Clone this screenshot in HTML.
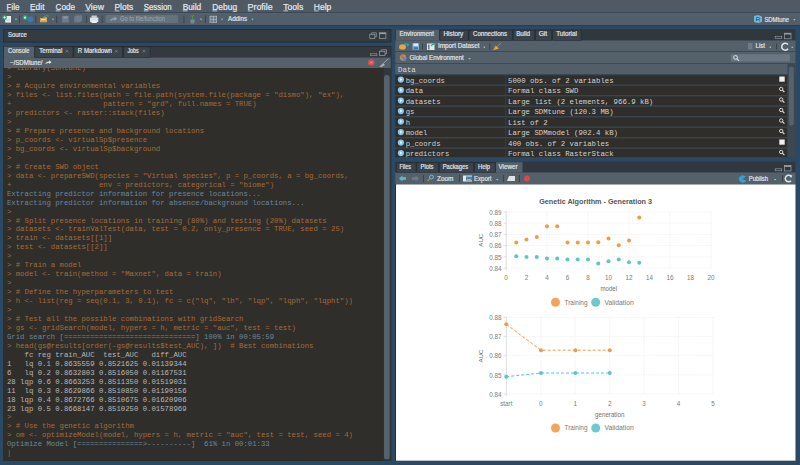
<!DOCTYPE html>
<html><head><meta charset="utf-8">
<style>
*{box-sizing:border-box;margin:0;padding:0}
html,body{width:800px;height:465px;overflow:hidden;background:#2c4964;font-family:"Liberation Sans",sans-serif}
.a{position:absolute}
#cwrap{left:3.8px;top:68px;width:380px;height:392.5px;overflow:hidden}
#ctext{left:3.2px;top:-3.7px;width:376px;height:397px;overflow:hidden;font-family:"Liberation Mono",monospace;font-size:7.3px;line-height:8.95px;white-space:pre;color:#a56c38}
#ctext .o{color:#6a869d}
#ctext .w{color:#b8b8b8}
.row{font-family:"Liberation Mono",monospace}
svg{position:absolute;left:0;top:0}
</style></head><body>

<svg width="800" height="465" viewBox="0 0 800 465" font-family="Liberation Sans, sans-serif">
<rect x="0" y="0" width="800" height="12.5" fill="#4f5a65"/>
<text x="6.5" y="9.6" font-size="8.6" fill="#e9ecef" textLength="13" lengthAdjust="spacingAndGlyphs" stroke="#e9ecef" stroke-width="0.18">File</text>
<rect x="6.7" y="10.5" width="4.6" height="0.8" fill="#cfd5da"/>
<text x="30" y="9.6" font-size="8.6" fill="#e9ecef" textLength="14.5" lengthAdjust="spacingAndGlyphs" stroke="#e9ecef" stroke-width="0.18">Edit</text>
<rect x="30.2" y="10.5" width="4.6" height="0.8" fill="#cfd5da"/>
<text x="55.5" y="9.6" font-size="8.6" fill="#e9ecef" textLength="19.5" lengthAdjust="spacingAndGlyphs" stroke="#e9ecef" stroke-width="0.18">Code</text>
<rect x="55.7" y="10.5" width="4.6" height="0.8" fill="#cfd5da"/>
<text x="85.2" y="9.6" font-size="8.6" fill="#e9ecef" textLength="18.8" lengthAdjust="spacingAndGlyphs" stroke="#e9ecef" stroke-width="0.18">View</text>
<rect x="85.4" y="10.5" width="4.6" height="0.8" fill="#cfd5da"/>
<text x="114.5" y="9.6" font-size="8.6" fill="#e9ecef" textLength="18.7" lengthAdjust="spacingAndGlyphs" stroke="#e9ecef" stroke-width="0.18">Plots</text>
<rect x="114.7" y="10.5" width="4.6" height="0.8" fill="#cfd5da"/>
<text x="143.7" y="9.6" font-size="8.6" fill="#e9ecef" textLength="28" lengthAdjust="spacingAndGlyphs" stroke="#e9ecef" stroke-width="0.18">Session</text>
<rect x="143.89999999999998" y="10.5" width="4.6" height="0.8" fill="#cfd5da"/>
<text x="182.7" y="9.6" font-size="8.6" fill="#e9ecef" textLength="18.5" lengthAdjust="spacingAndGlyphs" stroke="#e9ecef" stroke-width="0.18">Build</text>
<rect x="182.89999999999998" y="10.5" width="4.6" height="0.8" fill="#cfd5da"/>
<text x="212.3" y="9.6" font-size="8.6" fill="#e9ecef" textLength="24.8" lengthAdjust="spacingAndGlyphs" stroke="#e9ecef" stroke-width="0.18">Debug</text>
<rect x="212.5" y="10.5" width="4.6" height="0.8" fill="#cfd5da"/>
<text x="247.6" y="9.6" font-size="8.6" fill="#e9ecef" textLength="25.1" lengthAdjust="spacingAndGlyphs" stroke="#e9ecef" stroke-width="0.18">Profile</text>
<rect x="247.79999999999998" y="10.5" width="4.6" height="0.8" fill="#cfd5da"/>
<text x="283.2" y="9.6" font-size="8.6" fill="#e9ecef" textLength="20.1" lengthAdjust="spacingAndGlyphs" stroke="#e9ecef" stroke-width="0.18">Tools</text>
<rect x="283.4" y="10.5" width="4.6" height="0.8" fill="#cfd5da"/>
<text x="313.8" y="9.6" font-size="8.6" fill="#e9ecef" textLength="17.5" lengthAdjust="spacingAndGlyphs" stroke="#e9ecef" stroke-width="0.18">Help</text>
<rect x="314.0" y="10.5" width="4.6" height="0.8" fill="#cfd5da"/>
<rect x="0" y="12.3" width="800" height="0.9" fill="#39444e"/>
<rect x="0" y="13.2" width="800" height="12" fill="#525e69"/>
<rect x="0" y="13.2" width="800" height="0.6" fill="#5e6973"/>
<rect x="0" y="25.2" width="800" height="0.9" fill="#2e3a45"/>
<rect x="3.3" y="29.2" width="388" height="13.3" fill="#20282f"/>
<rect x="4.1" y="30" width="386.4" height="11.7" fill="#343b41"/>
<text x="8" y="36.8" font-size="6.3" fill="#e3e6e9" textLength="18.8" lengthAdjust="spacingAndGlyphs" stroke="#e3e6e9" stroke-width="0.18">Source</text>
<rect x="3.3" y="45.9" width="388" height="415" fill="#20282f"/>
<rect x="3.8" y="46.6" width="387" height="11.2" fill="#33393f"/>
<rect x="3.8" y="57.5" width="387" height="10.5" fill="#54606a"/>
<rect x="3.8" y="68" width="379.5" height="392.7" fill="#2f2e2b"/>
<rect x="383.3" y="68" width="8" height="392.7" fill="#30383e"/>
<rect x="384" y="75" width="5.6" height="384.3" fill="#55616b" rx="2.6"/>
<rect x="4" y="46.6" width="30.200000000000003" height="11.2" fill="#54606a"/>
<text x="8" y="53.2" font-size="6.3" fill="#e3e6e9" textLength="21.5" lengthAdjust="spacingAndGlyphs" stroke="#e3e6e9" stroke-width="0.18">Console</text>
<rect x="34.6" y="46.6" width="38.6" height="11" fill="#262b30"/>
<rect x="35.2" y="47.2" width="37.4" height="9.8" fill="#3b434a"/>
<path d="M65.5 49.900000000000006L68.1 52.5M68.1 49.900000000000006L65.5 52.5" stroke="#8a939b" stroke-width="0.6"/>
<text x="39.3" y="53.2" font-size="6.3" fill="#e3e6e9" textLength="23" lengthAdjust="spacingAndGlyphs" stroke="#e3e6e9" stroke-width="0.18">Terminal</text>
<rect x="73.6" y="46.6" width="49.2" height="11" fill="#262b30"/>
<rect x="74.19999999999999" y="47.2" width="48.0" height="9.8" fill="#3b434a"/>
<path d="M115.1 49.900000000000006L117.69999999999999 52.5M117.69999999999999 49.900000000000006L115.1 52.5" stroke="#8a939b" stroke-width="0.6"/>
<text x="77.8" y="53.2" font-size="6.3" fill="#e3e6e9" textLength="34.2" lengthAdjust="spacingAndGlyphs" stroke="#e3e6e9" stroke-width="0.18">R Markdown</text>
<rect x="123.4" y="46.6" width="27.0" height="11" fill="#262b30"/>
<rect x="124.0" y="47.2" width="25.8" height="9.8" fill="#3b434a"/>
<path d="M142.7 49.900000000000006L145.3 52.5M145.3 49.900000000000006L142.7 52.5" stroke="#8a939b" stroke-width="0.6"/>
<text x="127.4" y="53.2" font-size="6.3" fill="#e3e6e9" textLength="11.4" lengthAdjust="spacingAndGlyphs" stroke="#e3e6e9" stroke-width="0.18">Jobs</text>
<text x="10" y="64.5" font-size="6.3" fill="#e3e6e9" textLength="32.5" lengthAdjust="spacingAndGlyphs" stroke="#e3e6e9" stroke-width="0.18">~/SDMtune/</text>
<path d="M45.2 64.3 Q46 61.6 49.2 61.6 L49.2 60.3 L51.5 62.2 L49.2 64.1 L49.2 62.8 Q47 62.8 45.2 64.3Z" fill="#e3e6e9"/>
<circle cx="371.2" cy="62.5" r="3.3" fill="#d64b4b"/>
<path d="M369.6 61.6 L372.8 63.4 M369.6 63.4 L372.8 61.6" stroke="#f4b0b0" stroke-width="0.5"/>
<path d="M380 66.5 L388.5 58.5" stroke="#aab2b9" stroke-width="0.8"/><path d="M379.5 66.8 L383.5 63.5 L385 65 L381.5 67Z" fill="#aab2b9"/>
<rect x="369.8" y="34.3" width="5" height="4.2" fill="none" stroke="#9aa3ab" stroke-width="0.7"/><path d="M371.6 34.3 V32.8 H376.3 V36.8 H374.8" fill="none" stroke="#9aa3ab" stroke-width="0.7"/>
<rect x="379.4" y="32.8" width="6.5" height="5.7" fill="none" stroke="#9aa3ab" stroke-width="0.7"/><rect x="379.4" y="32.8" width="6.5" height="1.3" fill="#9aa3ab"/>
<rect x="370.3" y="53.8" width="6.6" height="1.8" fill="none" stroke="#9aa3ab" stroke-width="0.6"/>
<rect x="379.5" y="51.3" width="5.5" height="4.2" fill="none" stroke="#9aa3ab" stroke-width="0.7"/><path d="M381.3 51.3 V49.8 H386.5 V53.8 H385" fill="none" stroke="#9aa3ab" stroke-width="0.7"/>
<rect x="395.3" y="29.3" width="400.2" height="11.2" fill="#30373d"/>
<rect x="395.3" y="40.5" width="400.2" height="10.8" fill="#54606a"/>
<rect x="395.3" y="51.3" width="400.2" height="0.6" fill="#39434c"/>
<rect x="395.3" y="51.9" width="400.2" height="11.2" fill="#54606a"/>
<rect x="395.3" y="63" width="400.2" height="0.7" fill="#39434c"/>
<rect x="395.3" y="63.7" width="400.2" height="10.3" fill="#525e68"/>
<rect x="396" y="29.6" width="43.19999999999999" height="11" fill="#54606a"/>
<text x="399.5" y="36.2" font-size="6.3" fill="#e3e6e9" textLength="34.5" lengthAdjust="spacingAndGlyphs" stroke="#e3e6e9" stroke-width="0.18">Environment</text>
<rect x="439.5" y="29.9" width="29.0" height="10.6" fill="#262b30"/>
<rect x="440.1" y="30.5" width="27.8" height="9.5" fill="#3b434a"/>
<text x="443.5" y="36.2" font-size="6.3" fill="#e3e6e9" textLength="19.7" lengthAdjust="spacingAndGlyphs" stroke="#e3e6e9" stroke-width="0.18">History</text>
<rect x="468.8" y="29.9" width="43.69999999999999" height="10.6" fill="#262b30"/>
<rect x="469.40000000000003" y="30.5" width="42.499999999999986" height="9.5" fill="#3b434a"/>
<text x="473" y="36.2" font-size="6.3" fill="#e3e6e9" textLength="34" lengthAdjust="spacingAndGlyphs" stroke="#e3e6e9" stroke-width="0.18">Connections</text>
<rect x="512.9" y="29.9" width="22.100000000000023" height="10.6" fill="#262b30"/>
<rect x="513.5" y="30.5" width="20.900000000000023" height="9.5" fill="#3b434a"/>
<text x="516.2" y="36.2" font-size="6.3" fill="#e3e6e9" textLength="13.8" lengthAdjust="spacingAndGlyphs" stroke="#e3e6e9" stroke-width="0.18">Build</text>
<rect x="535.4" y="29.9" width="16.600000000000023" height="10.6" fill="#262b30"/>
<rect x="536.0" y="30.5" width="15.400000000000023" height="9.5" fill="#3b434a"/>
<text x="538.7" y="36.2" font-size="6.3" fill="#e3e6e9" textLength="8.5" lengthAdjust="spacingAndGlyphs" stroke="#e3e6e9" stroke-width="0.18">Git</text>
<rect x="552.5" y="29.9" width="29.0" height="10.6" fill="#262b30"/>
<rect x="553.1" y="30.5" width="27.8" height="9.5" fill="#3b434a"/>
<text x="556.2" y="36.2" font-size="6.3" fill="#e3e6e9" textLength="20.6" lengthAdjust="spacingAndGlyphs" stroke="#e3e6e9" stroke-width="0.18">Tutorial</text>
<rect x="775.2" y="36.4" width="6.6" height="2" fill="none" stroke="#9aa3ab" stroke-width="0.6"/>
<rect x="784.4" y="33.2" width="6.6" height="5.6" fill="none" stroke="#9aa3ab" stroke-width="0.7"/><rect x="784.4" y="33.2" width="6.6" height="1.3" fill="#9aa3ab"/>
<ellipse cx="402.5" cy="47" rx="3.5" ry="2.8" fill="#e8a24a"/><path d="M404 44.5 Q406 43 408.5 44.8 L407 46" stroke="#3aa890" stroke-width="1.2" fill="none"/>
<rect x="412.5" y="43.2" width="6.5" height="6.5" fill="#7fb3df"/><rect x="413.5" y="43.6" width="4.5" height="2.2" fill="#e8f0f8"/><rect x="413.8" y="47.2" width="4" height="2" fill="#3d6f9a"/>
<rect x="422" y="43.5" width="0.7" height="6" fill="#2d353c"/>
<rect x="427" y="43.5" width="7.5" height="6.5" fill="#e6e9ec"/><rect x="428" y="44.5" width="1.5" height="5" fill="#6b7a86"/><path d="M431 46 Q433 43 436.5 44" stroke="#2aa38a" stroke-width="1.3" fill="none"/>
<text x="438" y="48.3" font-size="6.3" fill="#e3e6e9" textLength="41.5" lengthAdjust="spacingAndGlyphs" stroke="#e3e6e9" stroke-width="0.18">Import Dataset</text>
<path d="M483 46.8 h2.6 l-1.3 1.3z" fill="#c9cfd4"/>
<rect x="489.5" y="43.5" width="0.7" height="6" fill="#2d353c"/>
<path d="M501 42.6 L497.3 46.6" stroke="#c98a3a" stroke-width="0.9"/><path d="M493.2 50.2 L495.6 45.6 L499 48.6Z" fill="#eba848"/><path d="M494.4 49.4 L496.4 46.6" stroke="#c77a2a" stroke-width="0.5"/>
<rect x="748" y="43" width="4.5" height="6.5" fill="#6f7b86"/>
<text x="755.5" y="48.3" font-size="6.3" fill="#e3e6e9" textLength="9.5" lengthAdjust="spacingAndGlyphs" stroke="#e3e6e9" stroke-width="0.18">List</text>
<path d="M769 46.8 h2.6 l-1.3 1.3z" fill="#c9cfd4"/>
<rect x="776" y="43.5" width="0.7" height="6" fill="#2d353c"/>
<path d="M788 44.5 A3.5 3.5 0 1 0 788 48.8" stroke="#e3e6e9" stroke-width="1.5" fill="none"/>
<path d="M791 46.8 h2.6 l-1.3 1.3z" fill="#c9cfd4"/>
<circle cx="403" cy="57.5" r="3.2" fill="#b58a5a"/><circle cx="404.5" cy="58.8" r="2" fill="#4f9bd0"/><path d="M400.5 55 L406 60.5" stroke="#d04040" stroke-width="0.8"/>
<text x="409.5" y="59.5" font-size="6.3" fill="#e3e6e9" textLength="54.3" lengthAdjust="spacingAndGlyphs" stroke="#e3e6e9" stroke-width="0.18">Global Environment</text>
<path d="M468.2 58.2 h2.6 l-1.3 1.3z" fill="#c9cfd4"/>
<rect x="730.8" y="54.2" width="59.2" height="7.3" fill="#6a7782" rx="1"/>
<circle cx="735.5" cy="57.4" r="1.9" fill="none" stroke="#e3e6e9" stroke-width="0.9"/><path d="M736.8 58.7 L739 60.9" stroke="#e3e6e9" stroke-width="1.1"/>
<text x="398" y="71.5" font-size="7.3" fill="#d5dade" textLength="17.8" lengthAdjust="spacingAndGlyphs" font-family="Liberation Mono">Data</text>
<rect x="395.3" y="74.2" width="392.2" height="10.5" fill="#3c4751"/>
<rect x="395.3" y="75.3" width="110.2" height="9.4" fill="#2f2e2b"/>
<rect x="506.1" y="75.3" width="281.4" height="9.4" fill="#2f2e2b"/>
<circle cx="400.9" cy="79.60000000000001" r="3.1" fill="#86c6ee"/><path d="M400 78.10000000000001 L402.4 79.60000000000001 L400 81.10000000000001Z" fill="#eaf6fd"/>
<text x="405.7" y="82.7" font-size="7.3" fill="#d2d2d2" textLength="39.24" lengthAdjust="spacingAndGlyphs" font-family="Liberation Mono">bg_coords</text>
<text x="508" y="82.7" font-size="7.3" fill="#d2d2d2" textLength="105.60000000000001" lengthAdjust="spacingAndGlyphs" font-family="Liberation Mono">5000 obs. of 2 variables</text>
<rect x="779.3" y="76.5" width="5.4" height="5.2" fill="#eeeeee"/>
<rect x="395.3" y="84.7" width="392.2" height="10.5" fill="#3c4751"/>
<rect x="395.3" y="85.8" width="110.2" height="9.4" fill="#2f2e2b"/>
<rect x="506.1" y="85.8" width="281.4" height="9.4" fill="#2f2e2b"/>
<circle cx="400.9" cy="90.10000000000001" r="3.1" fill="#86c6ee"/><path d="M400 88.60000000000001 L402.4 90.10000000000001 L400 91.60000000000001Z" fill="#eaf6fd"/>
<text x="405.7" y="93.2" font-size="7.3" fill="#d2d2d2" textLength="17.44" lengthAdjust="spacingAndGlyphs" font-family="Liberation Mono">data</text>
<text x="508" y="93.2" font-size="7.3" fill="#d2d2d2" textLength="70.4" lengthAdjust="spacingAndGlyphs" font-family="Liberation Mono">Formal class SWD</text>
<circle cx="781.2" cy="89.0" r="1.7" fill="none" stroke="#e6e6e6" stroke-width="0.9"/><path d="M782.4 90.2 L784.4 92.2" stroke="#e6e6e6" stroke-width="1.1"/>
<rect x="395.3" y="95.2" width="392.2" height="10.5" fill="#3c4751"/>
<rect x="395.3" y="96.3" width="110.2" height="9.4" fill="#2f2e2b"/>
<rect x="506.1" y="96.3" width="281.4" height="9.4" fill="#2f2e2b"/>
<circle cx="400.9" cy="100.60000000000001" r="3.1" fill="#86c6ee"/><path d="M400 99.10000000000001 L402.4 100.60000000000001 L400 102.10000000000001Z" fill="#eaf6fd"/>
<text x="405.7" y="103.7" font-size="7.3" fill="#d2d2d2" textLength="34.88" lengthAdjust="spacingAndGlyphs" font-family="Liberation Mono">datasets</text>
<text x="508" y="103.7" font-size="7.3" fill="#d2d2d2" textLength="145.20000000000002" lengthAdjust="spacingAndGlyphs" font-family="Liberation Mono">Large list (2 elements, 966.9 kB)</text>
<circle cx="781.2" cy="99.5" r="1.7" fill="none" stroke="#e6e6e6" stroke-width="0.9"/><path d="M782.4 100.7 L784.4 102.7" stroke="#e6e6e6" stroke-width="1.1"/>
<rect x="395.3" y="105.7" width="392.2" height="10.5" fill="#3c4751"/>
<rect x="395.3" y="106.8" width="110.2" height="9.4" fill="#2f2e2b"/>
<rect x="506.1" y="106.8" width="281.4" height="9.4" fill="#2f2e2b"/>
<circle cx="400.9" cy="111.10000000000001" r="3.1" fill="#86c6ee"/><path d="M400 109.60000000000001 L402.4 111.10000000000001 L400 112.60000000000001Z" fill="#eaf6fd"/>
<text x="405.7" y="114.2" font-size="7.3" fill="#d2d2d2" textLength="8.72" lengthAdjust="spacingAndGlyphs" font-family="Liberation Mono">gs</text>
<text x="508" y="114.2" font-size="7.3" fill="#d2d2d2" textLength="105.60000000000001" lengthAdjust="spacingAndGlyphs" font-family="Liberation Mono">Large SDMtune (120.3 MB)</text>
<circle cx="781.2" cy="110.0" r="1.7" fill="none" stroke="#e6e6e6" stroke-width="0.9"/><path d="M782.4 111.2 L784.4 113.2" stroke="#e6e6e6" stroke-width="1.1"/>
<rect x="395.3" y="116.2" width="392.2" height="10.5" fill="#3c4751"/>
<rect x="395.3" y="117.3" width="110.2" height="9.4" fill="#2f2e2b"/>
<rect x="506.1" y="117.3" width="281.4" height="9.4" fill="#2f2e2b"/>
<circle cx="400.9" cy="121.60000000000001" r="3.1" fill="#86c6ee"/><path d="M400 120.10000000000001 L402.4 121.60000000000001 L400 123.10000000000001Z" fill="#eaf6fd"/>
<text x="405.7" y="124.7" font-size="7.3" fill="#d2d2d2" textLength="4.36" lengthAdjust="spacingAndGlyphs" font-family="Liberation Mono">h</text>
<text x="508" y="124.7" font-size="7.3" fill="#d2d2d2" textLength="39.6" lengthAdjust="spacingAndGlyphs" font-family="Liberation Mono">List of 2</text>
<circle cx="781.2" cy="120.5" r="1.7" fill="none" stroke="#e6e6e6" stroke-width="0.9"/><path d="M782.4 121.7 L784.4 123.7" stroke="#e6e6e6" stroke-width="1.1"/>
<rect x="395.3" y="126.7" width="392.2" height="10.5" fill="#3c4751"/>
<rect x="395.3" y="127.8" width="110.2" height="9.4" fill="#2f2e2b"/>
<rect x="506.1" y="127.8" width="281.4" height="9.4" fill="#2f2e2b"/>
<circle cx="400.9" cy="132.1" r="3.1" fill="#86c6ee"/><path d="M400 130.6 L402.4 132.1 L400 133.6Z" fill="#eaf6fd"/>
<text x="405.7" y="135.2" font-size="7.3" fill="#d2d2d2" textLength="21.8" lengthAdjust="spacingAndGlyphs" font-family="Liberation Mono">model</text>
<text x="508" y="135.2" font-size="7.3" fill="#d2d2d2" textLength="110.00000000000001" lengthAdjust="spacingAndGlyphs" font-family="Liberation Mono">Large SDMmodel (902.4 kB)</text>
<circle cx="781.2" cy="131.0" r="1.7" fill="none" stroke="#e6e6e6" stroke-width="0.9"/><path d="M782.4 132.2 L784.4 134.2" stroke="#e6e6e6" stroke-width="1.1"/>
<rect x="395.3" y="137.2" width="392.2" height="10.5" fill="#3c4751"/>
<rect x="395.3" y="138.29999999999998" width="110.2" height="9.4" fill="#2f2e2b"/>
<rect x="506.1" y="138.29999999999998" width="281.4" height="9.4" fill="#2f2e2b"/>
<circle cx="400.9" cy="142.6" r="3.1" fill="#86c6ee"/><path d="M400 141.1 L402.4 142.6 L400 144.1Z" fill="#eaf6fd"/>
<text x="405.7" y="145.7" font-size="7.3" fill="#d2d2d2" textLength="34.88" lengthAdjust="spacingAndGlyphs" font-family="Liberation Mono">p_coords</text>
<text x="508" y="145.7" font-size="7.3" fill="#d2d2d2" textLength="101.2" lengthAdjust="spacingAndGlyphs" font-family="Liberation Mono">400 obs. of 2 variables</text>
<rect x="779.3" y="139.5" width="5.4" height="5.2" fill="#eeeeee"/>
<rect x="395.3" y="147.7" width="392.2" height="10.5" fill="#3c4751"/>
<rect x="395.3" y="148.79999999999998" width="110.2" height="9.4" fill="#2f2e2b"/>
<rect x="506.1" y="148.79999999999998" width="281.4" height="9.4" fill="#2f2e2b"/>
<circle cx="400.9" cy="153.1" r="3.1" fill="#86c6ee"/><path d="M400 151.6 L402.4 153.1 L400 154.6Z" fill="#eaf6fd"/>
<text x="405.7" y="156.2" font-size="7.3" fill="#d2d2d2" textLength="43.6" lengthAdjust="spacingAndGlyphs" font-family="Liberation Mono">predictors</text>
<text x="508" y="156.2" font-size="7.3" fill="#d2d2d2" textLength="105.60000000000001" lengthAdjust="spacingAndGlyphs" font-family="Liberation Mono">Formal class RasterStack</text>
<circle cx="781.2" cy="152.0" r="1.7" fill="none" stroke="#e6e6e6" stroke-width="0.9"/><path d="M782.4 153.2 L784.4 155.2" stroke="#e6e6e6" stroke-width="1.1"/>
<rect x="395" y="157.2" width="400.5" height="4.6" fill="#2c4964"/>
<rect x="787.5" y="63.7" width="8" height="93.5" fill="#3c4751"/>
<rect x="788.9" y="66.5" width="4.9" height="59.2" fill="#56616b" rx="2.4"/>
<rect x="395.3" y="161.8" width="400.2" height="10.7" fill="#30373d"/>
<rect x="395.3" y="172.5" width="400.2" height="11.7" fill="#54606a"/>
<rect x="395.3" y="184.2" width="400.2" height="276.6" fill="#20282f"/>
<rect x="396" y="184.4" width="399.5" height="276.3" fill="#ffffff"/>
<rect x="396" y="162.5" width="20.19999999999999" height="10" fill="#262b30"/>
<rect x="396.6" y="163.1" width="18.99999999999999" height="8.9" fill="#3b434a"/>
<text x="399.5" y="169" font-size="6.3" fill="#e3e6e9" textLength="11.5" lengthAdjust="spacingAndGlyphs" stroke="#e3e6e9" stroke-width="0.18">Files</text>
<rect x="416.5" y="162.5" width="22.100000000000023" height="10" fill="#262b30"/>
<rect x="417.1" y="163.1" width="20.900000000000023" height="8.9" fill="#3b434a"/>
<text x="420.5" y="169" font-size="6.3" fill="#e3e6e9" textLength="13" lengthAdjust="spacingAndGlyphs" stroke="#e3e6e9" stroke-width="0.18">Plots</text>
<rect x="439" y="162.5" width="34.60000000000002" height="10" fill="#262b30"/>
<rect x="439.6" y="163.1" width="33.40000000000002" height="8.9" fill="#3b434a"/>
<text x="442.8" y="169" font-size="6.3" fill="#e3e6e9" textLength="25.2" lengthAdjust="spacingAndGlyphs" stroke="#e3e6e9" stroke-width="0.18">Packages</text>
<rect x="474" y="162.5" width="21.600000000000023" height="10" fill="#262b30"/>
<rect x="474.6" y="163.1" width="20.400000000000023" height="8.9" fill="#3b434a"/>
<text x="478" y="169" font-size="6.3" fill="#e3e6e9" textLength="12" lengthAdjust="spacingAndGlyphs" stroke="#e3e6e9" stroke-width="0.18">Help</text>
<rect x="496" y="162.2" width="26.5" height="10.4" fill="#54606a"/>
<text x="498.5" y="169" font-size="6.3" fill="#e3e6e9" textLength="19" lengthAdjust="spacingAndGlyphs" stroke="#e3e6e9" stroke-width="0.18">Viewer</text>
<rect x="775.2" y="168.8" width="6.6" height="2" fill="none" stroke="#9aa3ab" stroke-width="0.6"/>
<rect x="784.4" y="165.6" width="6.6" height="5.4" fill="none" stroke="#9aa3ab" stroke-width="0.7"/><rect x="784.4" y="165.6" width="6.6" height="1.3" fill="#9aa3ab"/>
<path d="M399 178.5 L402.5 175.5 V177.3 H406 V179.7 H402.5 V181.5Z" fill="#5fb8d8"/>
<path d="M419 178.5 L415.5 175.5 V177.3 H412 V179.7 H415.5 V181.5Z" fill="#6e7c88"/>
<rect x="423" y="175" width="0.7" height="7" fill="#2d353c"/>
<circle cx="431.5" cy="177" r="1.9" fill="none" stroke="#6ec0e0" stroke-width="1"/><path d="M430 178.6 L427.6 181" stroke="#d08a30" stroke-width="1.2"/>
<text x="437" y="180.5" font-size="6.3" fill="#e3e6e9" textLength="16.5" lengthAdjust="spacingAndGlyphs" stroke="#e3e6e9" stroke-width="0.18">Zoom</text>
<rect x="459" y="175" width="0.7" height="7" fill="#2d353c"/>
<rect x="463" y="175.5" width="9" height="6" fill="#e6e9ec"/><rect x="466" y="176.5" width="6" height="4" fill="#3f87c0"/><rect x="467" y="179" width="4" height="1.5" fill="#e9a43e"/>
<text x="474" y="180.5" font-size="6.3" fill="#e3e6e9" textLength="17.5" lengthAdjust="spacingAndGlyphs" stroke="#e3e6e9" stroke-width="0.18">Export</text>
<path d="M496 178.9 h2.6 l-1.3 1.3z" fill="#c9cfd4"/>
<rect x="503" y="175" width="0.7" height="7" fill="#2d353c"/>
<path d="M507 181 L509 176 H515 V181Z" fill="#dfe3e6"/>
<rect x="519" y="175" width="0.7" height="7" fill="#2d353c"/>
<circle cx="527" cy="178.4" r="3" fill="#d64b4b"/>
<path d="M738.5 178 L742 175 L746 176.5 L742.5 179 L746.5 181 L743 183 L739.5 181Z" fill="#3a9fd0"/>
<text x="748.8" y="180.5" font-size="6.3" fill="#e3e6e9" textLength="19.2" lengthAdjust="spacingAndGlyphs" stroke="#e3e6e9" stroke-width="0.18">Publish</text>
<path d="M773.8 178.9 h2.6 l-1.3 1.3z" fill="#c9cfd4"/>
<rect x="782" y="175" width="0.7" height="7" fill="#2d353c"/>
<path d="M791 176.3 A3.3 3.3 0 1 0 791 180.8" stroke="#e3e6e9" stroke-width="1.5" fill="none"/><path d="M789.5 175 L792.5 175.5 L791 178Z" fill="#e3e6e9"/>
<rect x="5.2" y="16" width="5.8" height="6.6" fill="#e9ecee"/><rect x="6.2" y="19" width="3.6" height="0.5" fill="#b9c2c8"/><rect x="6.2" y="20.5" width="3.6" height="0.5" fill="#b9c2c8"/><circle cx="4.6" cy="17.4" r="2.4" fill="#2f9e78"/><path d="M3.4 17.4h2.4M4.6 16.2v2.4" stroke="#f2f2f2" stroke-width="0.8"/>
<path d="M14.8 18.8 h2.4 l-1.2 1.2z" fill="#c9cfd4"/>
<rect x="19.3" y="15.5" width="0.7" height="7.5" fill="#2f3a44"/>
<path d="M27.5 17.2 L30.5 16.2 L33.3 17.2 V21 L30.5 22.2 L27.5 21Z" fill="#3a78ad"/><circle cx="25" cy="17.6" r="2.5" fill="#2f9e78"/><rect x="24.1" y="16.7" width="1.8" height="1.8" fill="#eef5f2"/>
<rect x="35.5" y="15.5" width="0.7" height="7.5" fill="#2f3a44"/>
<path d="M40 18 h3 l0.8 -0.8 h3.2 v5 h-7z" fill="#e8a04a"/><rect x="41" y="19" width="5" height="1.2" fill="#f7dcaa"/><path d="M44 17 Q46 15 48.8 16.2" stroke="#2fa88a" stroke-width="1.2" fill="none"/><path d="M41 22.3h5" stroke="#2f9e78" stroke-width="0.8"/>
<path d="M51.8 18.8 h2.4 l-1.2 1.2z" fill="#c9cfd4"/>
<rect x="56.4" y="15.5" width="0.7" height="7.5" fill="#2f3a44"/>
<rect x="62" y="15.8" width="6.8" height="6.8" fill="#6e7a85"/><rect x="63.3" y="16.3" width="4.2" height="2.3" fill="#8b96a0"/>
<rect x="74" y="16.5" width="6.5" height="6" fill="#6a7681"/><rect x="75.5" y="15.3" width="6.5" height="6" fill="#707c87"/>
<rect x="86" y="15.5" width="0.7" height="7.5" fill="#2f3a44"/>
<rect x="90" y="17.5" width="8.3" height="4.5" fill="#dfe3e6"/><rect x="91.5" y="15.5" width="5.3" height="2.5" fill="#c5ccd2"/><rect x="91.5" y="21" width="5.3" height="2" fill="#f0f2f4"/>
<rect x="101.8" y="15.5" width="0.7" height="7.5" fill="#2f3a44"/>
<rect x="105.6" y="15" width="72.4" height="8" fill="#65717b" rx="1"/>
<path d="M110 21.5 Q110.5 18 114.5 18 V16.6 L117 18.8 L114.5 21 V19.6 Q112 19.6 110 21.5Z" fill="#9aa4ad"/>
<text x="120" y="21.3" font-size="6.3" fill="#a3acb4" textLength="45" lengthAdjust="spacingAndGlyphs">Go to file/function</text>
<rect x="183.6" y="15.5" width="0.7" height="7.5" fill="#2f3a44"/>
<path d="M190 19.5 h5 l-0.8 4 h-3.4z" fill="#7b8690"/><path d="M192.5 19.5 V15.8 M192.5 17 L190.8 15.5 M192.5 16.5 L194.2 15" stroke="#3aa84a" stroke-width="0.9"/><circle cx="192.5" cy="15.5" r="0.8" fill="#d04a30"/>
<path d="M199.8 18.8 h2.4 l-1.2 1.2z" fill="#c9cfd4"/>
<rect x="205" y="15.5" width="0.7" height="7.5" fill="#2f3a44"/>
<rect x="209.6" y="15.8" width="7.4" height="7" fill="#aeb6bd"/><rect x="210.4" y="16.6" width="2.6" height="2.4" fill="#6e7a85"/><rect x="213.7" y="16.6" width="2.6" height="2.4" fill="#6e7a85"/><rect x="210.4" y="19.7" width="2.6" height="2.4" fill="#6e7a85"/><rect x="213.7" y="19.7" width="2.6" height="2.4" fill="#6e7a85"/>
<path d="M220.8 18.8 h2.4 l-1.2 1.2z" fill="#c9cfd4"/>
<text x="228" y="21.3" font-size="6.5" fill="#e3e6e9" textLength="19" lengthAdjust="spacingAndGlyphs" stroke="#e3e6e9" stroke-width="0.18">Addins</text>
<path d="M251.3 18.8 h2.4 l-1.2 1.2z" fill="#c9cfd4"/>
<path d="M754 16 L758 15 L762 16.5 V22 L758 23 L754 22Z" fill="#6fb6d8"/><path d="M756.5 17.5 V21 M756.5 17.5 H758.5 Q759.8 17.5 759.8 18.6 Q759.8 19.6 758.5 19.6 H756.5 M758.3 19.6 L760 21.2" stroke="#2b5a80" stroke-width="0.8" fill="none"/>
<text x="764.4" y="21.6" font-size="6.5" fill="#e3e6e9" textLength="24.6" lengthAdjust="spacingAndGlyphs" stroke="#e3e6e9" stroke-width="0.18">SDMtune</text>
<path d="M793.2 19.2 h2.4 l-1.2 1.2z" fill="#c9cfd4"/>
</svg>
<div id="cwrap" class="a"><div id="ctext" class="a">&gt; library(SDMtune)
&gt;
&gt; # Acquire environmental variables
&gt; files &lt;- list.files(path = file.path(system.file(package = &quot;dismo&quot;), &quot;ex&quot;),
+                     pattern = &quot;grd&quot;, full.names = TRUE)
&gt; predictors &lt;- raster::stack(files)
&gt;
&gt; # Prepare presence and background locations
&gt; p_coords &lt;- virtualSp$presence
&gt; bg_coords &lt;- virtualSp$background
&gt;
&gt; # Create SWD object
&gt; data &lt;- prepareSWD(species = &quot;Virtual species&quot;, p = p_coords, a = bg_coords,
+                    env = predictors, categorical = &quot;biome&quot;)
<span class="o">Extracting predictor information for presence locations...</span>
<span class="o">Extracting predictor information for absence/background locations...</span>
&gt;
&gt; # Split presence locations in training (80%) and testing (20%) datasets
&gt; datasets &lt;- trainValTest(data, test = 0.2, only_presence = TRUE, seed = 25)
&gt; train &lt;- datasets[[1]]
&gt; test &lt;- datasets[[2]]
&gt;
&gt; # Train a model
&gt; model &lt;- train(method = &quot;Maxnet&quot;, data = train)
&gt;
&gt; # Define the hyperparameters to test
&gt; h &lt;- list(reg = seq(0.1, 3, 0.1), fc = c(&quot;lq&quot;, &quot;lh&quot;, &quot;lqp&quot;, &quot;lqph&quot;, &quot;lqpht&quot;))
&gt;
&gt; # Test all the possible combinations with gridSearch
&gt; gs &lt;- gridSearch(model, hypers = h, metric = &quot;auc&quot;, test = test)
<span class="o">Grid search [==============================] 100% in 00:05:59</span>
&gt; head(gs@results[order(-gs@results$test_AUC), ])  # Best combinations
<span class="w">    fc reg train_AUC  test_AUC   diff_AUC</span>
<span class="w">1   lq 0.1 0.8635559 0.8521625 0.01139344</span>
<span class="w">6   lq 0.2 0.8632803 0.8516050 0.01167531</span>
<span class="w">28 lqp 0.6 0.8663253 0.8511350 0.01519031</span>
<span class="w">11  lq 0.3 0.8629866 0.8510850 0.01190156</span>
<span class="w">18 lqp 0.4 0.8672766 0.8510675 0.01620906</span>
<span class="w">23 lqp 0.5 0.8668147 0.8510250 0.01578969</span>
&gt;
&gt; # Use the genetic algorithm
&gt; om &lt;- optimizeModel(model, hypers = h, metric = &quot;auc&quot;, test = test, seed = 4)
<span class="o">Optimize Model [===============&gt;----------]  61% in 00:01:33</span>
|</div></div>
<svg width="800" height="465" viewBox="0 0 800 465" font-family="Liberation Sans, sans-serif">
<text x="595.6" text-anchor="middle" y="203.8" font-size="7.23" font-weight="bold" fill="#555">Genetic Algorithm - Generation 3</text>
<line x1="506" x2="712" y1="212" y2="212" stroke="#ececec" stroke-width="0.7" stroke-dasharray="1.5 1"/>
<line x1="503.5" x2="506" y1="212" y2="212" stroke="#ccc" stroke-width="0.6"/>
<text x="501.5" y="214.7" font-size="6.3" fill="#7a7a7a" text-anchor="end">0.89</text>
<line x1="506" x2="712" y1="223.2" y2="223.2" stroke="#ececec" stroke-width="0.7" stroke-dasharray="1.5 1"/>
<line x1="503.5" x2="506" y1="223.2" y2="223.2" stroke="#ccc" stroke-width="0.6"/>
<text x="501.5" y="225.89999999999998" font-size="6.3" fill="#7a7a7a" text-anchor="end">0.88</text>
<line x1="506" x2="712" y1="234.4" y2="234.4" stroke="#ececec" stroke-width="0.7" stroke-dasharray="1.5 1"/>
<line x1="503.5" x2="506" y1="234.4" y2="234.4" stroke="#ccc" stroke-width="0.6"/>
<text x="501.5" y="237.1" font-size="6.3" fill="#7a7a7a" text-anchor="end">0.87</text>
<line x1="506" x2="712" y1="245.6" y2="245.6" stroke="#ececec" stroke-width="0.7" stroke-dasharray="1.5 1"/>
<line x1="503.5" x2="506" y1="245.6" y2="245.6" stroke="#ccc" stroke-width="0.6"/>
<text x="501.5" y="248.29999999999998" font-size="6.3" fill="#7a7a7a" text-anchor="end">0.86</text>
<line x1="506" x2="712" y1="256.8" y2="256.8" stroke="#ececec" stroke-width="0.7" stroke-dasharray="1.5 1"/>
<line x1="503.5" x2="506" y1="256.8" y2="256.8" stroke="#ccc" stroke-width="0.6"/>
<text x="501.5" y="259.5" font-size="6.3" fill="#7a7a7a" text-anchor="end">0.85</text>
<line x1="506" x2="712" y1="268" y2="268" stroke="#ececec" stroke-width="0.7" stroke-dasharray="1.5 1"/>
<line x1="503.5" x2="506" y1="268" y2="268" stroke="#ccc" stroke-width="0.6"/>
<text x="501.5" y="270.7" font-size="6.3" fill="#7a7a7a" text-anchor="end">0.84</text>
<text x="506.0" y="279.9" font-size="6.3" fill="#7a7a7a" text-anchor="middle">0</text>
<text x="526.5" y="279.9" font-size="6.3" fill="#7a7a7a" text-anchor="middle">2</text>
<line x1="547.0" x2="547.0" y1="212" y2="268" stroke="#ececec" stroke-width="0.7" stroke-dasharray="1.5 1"/>
<text x="547.0" y="279.9" font-size="6.3" fill="#7a7a7a" text-anchor="middle">4</text>
<text x="567.5" y="279.9" font-size="6.3" fill="#7a7a7a" text-anchor="middle">6</text>
<line x1="588.0" x2="588.0" y1="212" y2="268" stroke="#ececec" stroke-width="0.7" stroke-dasharray="1.5 1"/>
<text x="588.0" y="279.9" font-size="6.3" fill="#7a7a7a" text-anchor="middle">8</text>
<text x="608.5" y="279.9" font-size="6.3" fill="#7a7a7a" text-anchor="middle">10</text>
<line x1="629.0" x2="629.0" y1="212" y2="268" stroke="#ececec" stroke-width="0.7" stroke-dasharray="1.5 1"/>
<text x="629.0" y="279.9" font-size="6.3" fill="#7a7a7a" text-anchor="middle">12</text>
<text x="649.5" y="279.9" font-size="6.3" fill="#7a7a7a" text-anchor="middle">14</text>
<line x1="670.0" x2="670.0" y1="212" y2="268" stroke="#ececec" stroke-width="0.7" stroke-dasharray="1.5 1"/>
<text x="670.0" y="279.9" font-size="6.3" fill="#7a7a7a" text-anchor="middle">16</text>
<text x="690.5" y="279.9" font-size="6.3" fill="#7a7a7a" text-anchor="middle">18</text>
<line x1="711.0" x2="711.0" y1="212" y2="268" stroke="#ececec" stroke-width="0.7" stroke-dasharray="1.5 1"/>
<text x="711.0" y="279.9" font-size="6.3" fill="#7a7a7a" text-anchor="middle">20</text>
<line x1="506.2" x2="506.2" y1="211" y2="270" stroke="#d4d4d4" stroke-width="0.8"/>
<text x="600.5" y="291.4" font-size="6.6" fill="#717171" textLength="16.5" lengthAdjust="spacingAndGlyphs">model</text>
<text transform="translate(482.6 240.2) rotate(-90)" font-size="6.2" fill="#666" text-anchor="middle">AUC</text>
<circle cx="516.25" cy="242.5" r="2" fill="#f39a45"/>
<circle cx="516.25" cy="256.25" r="2" fill="#5ec4c4"/>
<circle cx="526.5" cy="239.4" r="2" fill="#f39a45"/>
<circle cx="526.5" cy="256.9" r="2" fill="#5ec4c4"/>
<circle cx="536.75" cy="236.9" r="2" fill="#f39a45"/>
<circle cx="536.75" cy="256.9" r="2" fill="#5ec4c4"/>
<circle cx="547.0" cy="226.25" r="2" fill="#f39a45"/>
<circle cx="547.0" cy="258.4" r="2" fill="#5ec4c4"/>
<circle cx="557.25" cy="226.25" r="2" fill="#f39a45"/>
<circle cx="557.25" cy="258.4" r="2" fill="#5ec4c4"/>
<circle cx="567.5" cy="242.5" r="2" fill="#f39a45"/>
<circle cx="567.5" cy="259.4" r="2" fill="#5ec4c4"/>
<circle cx="577.75" cy="242.5" r="2" fill="#f39a45"/>
<circle cx="577.75" cy="259.4" r="2" fill="#5ec4c4"/>
<circle cx="588.0" cy="242.5" r="2" fill="#f39a45"/>
<circle cx="588.0" cy="259.4" r="2" fill="#5ec4c4"/>
<circle cx="598.25" cy="242.2" r="2" fill="#f39a45"/>
<circle cx="598.25" cy="263.4" r="2" fill="#5ec4c4"/>
<circle cx="608.5" cy="238.4" r="2" fill="#f39a45"/>
<circle cx="608.5" cy="261.25" r="2" fill="#5ec4c4"/>
<circle cx="618.75" cy="245.3" r="2" fill="#f39a45"/>
<circle cx="618.75" cy="259.4" r="2" fill="#5ec4c4"/>
<circle cx="629.0" cy="240.6" r="2" fill="#f39a45"/>
<circle cx="629.0" cy="262.2" r="2" fill="#5ec4c4"/>
<circle cx="639.25" cy="217.5" r="2" fill="#f39a45"/>
<circle cx="639.25" cy="262.8" r="2" fill="#5ec4c4"/>
<circle cx="555.5" cy="302.3" r="4.5" fill="#f39a45" opacity="0.9"/>
<text x="564.5" y="304.6" font-size="6.6" fill="#7a7a7a" textLength="23" lengthAdjust="spacingAndGlyphs">Training</text>
<circle cx="595.7" cy="302.3" r="4.5" fill="#5ec4c4" opacity="0.9"/>
<text x="604.4" y="304.6" font-size="6.6" fill="#7a7a7a" textLength="29.4" lengthAdjust="spacingAndGlyphs">Validation</text>
<line x1="506" x2="713" y1="317.4" y2="317.4" stroke="#ececec" stroke-width="0.7" stroke-dasharray="1.5 1"/>
<line x1="503.5" x2="506" y1="317.4" y2="317.4" stroke="#ccc" stroke-width="0.6"/>
<text x="501.5" y="320.09999999999997" font-size="6.3" fill="#7a7a7a" text-anchor="end">0.88</text>
<line x1="506" x2="713" y1="336.55" y2="336.55" stroke="#ececec" stroke-width="0.7" stroke-dasharray="1.5 1"/>
<line x1="503.5" x2="506" y1="336.55" y2="336.55" stroke="#ccc" stroke-width="0.6"/>
<text x="501.5" y="339.25" font-size="6.3" fill="#7a7a7a" text-anchor="end">0.87</text>
<line x1="506" x2="713" y1="355.7" y2="355.7" stroke="#ececec" stroke-width="0.7" stroke-dasharray="1.5 1"/>
<line x1="503.5" x2="506" y1="355.7" y2="355.7" stroke="#ccc" stroke-width="0.6"/>
<text x="501.5" y="358.4" font-size="6.3" fill="#7a7a7a" text-anchor="end">0.86</text>
<line x1="506" x2="713" y1="374.85" y2="374.85" stroke="#ececec" stroke-width="0.7" stroke-dasharray="1.5 1"/>
<line x1="503.5" x2="506" y1="374.85" y2="374.85" stroke="#ccc" stroke-width="0.6"/>
<text x="501.5" y="377.55" font-size="6.3" fill="#7a7a7a" text-anchor="end">0.85</text>
<line x1="506" x2="713" y1="394" y2="394" stroke="#ececec" stroke-width="0.7" stroke-dasharray="1.5 1"/>
<line x1="503.5" x2="506" y1="394" y2="394" stroke="#ccc" stroke-width="0.6"/>
<text x="501.5" y="396.7" font-size="6.3" fill="#7a7a7a" text-anchor="end">0.84</text>
<text x="506.3" y="405.7" font-size="6.3" fill="#7a7a7a" text-anchor="middle">start</text>
<line x1="540.75" x2="540.75" y1="317.4" y2="394" stroke="#ececec" stroke-width="0.7" stroke-dasharray="1.5 1"/>
<text x="540.75" y="405.7" font-size="6.3" fill="#7a7a7a" text-anchor="middle">0</text>
<line x1="575.2" x2="575.2" y1="317.4" y2="394" stroke="#ececec" stroke-width="0.7" stroke-dasharray="1.5 1"/>
<text x="575.2" y="405.7" font-size="6.3" fill="#7a7a7a" text-anchor="middle">1</text>
<line x1="609.65" x2="609.65" y1="317.4" y2="394" stroke="#ececec" stroke-width="0.7" stroke-dasharray="1.5 1"/>
<text x="609.65" y="405.7" font-size="6.3" fill="#7a7a7a" text-anchor="middle">2</text>
<line x1="644.1" x2="644.1" y1="317.4" y2="394" stroke="#ececec" stroke-width="0.7" stroke-dasharray="1.5 1"/>
<text x="644.1" y="405.7" font-size="6.3" fill="#7a7a7a" text-anchor="middle">3</text>
<line x1="678.55" x2="678.55" y1="317.4" y2="394" stroke="#ececec" stroke-width="0.7" stroke-dasharray="1.5 1"/>
<text x="678.55" y="405.7" font-size="6.3" fill="#7a7a7a" text-anchor="middle">4</text>
<line x1="713.0" x2="713.0" y1="317.4" y2="394" stroke="#ececec" stroke-width="0.7" stroke-dasharray="1.5 1"/>
<text x="713.0" y="405.7" font-size="6.3" fill="#7a7a7a" text-anchor="middle">5</text>
<line x1="506.3" x2="506.3" y1="316.5" y2="396" stroke="#d4d4d4" stroke-width="0.8"/>
<text x="595" y="416.5" font-size="6.6" fill="#717171" textLength="29.4" lengthAdjust="spacingAndGlyphs">generation</text>
<text transform="translate(482.8 356) rotate(-90)" font-size="6.2" fill="#666" text-anchor="middle">AUC</text>
<polyline points="506.3,324.3 541,350.2 575.4,350.2 609.8,350.2" fill="none" stroke="#f39a45" stroke-width="1" stroke-dasharray="3 2"/>
<polyline points="506.3,376.7 541,373 575.4,373 609.8,373" fill="none" stroke="#5ec4c4" stroke-width="1" stroke-dasharray="3 2"/>
<circle cx="506.3" cy="324.3" r="2" fill="#f39a45"/>
<circle cx="506.3" cy="376.7" r="2" fill="#5ec4c4"/>
<circle cx="541" cy="350.2" r="2" fill="#f39a45"/>
<circle cx="541" cy="373" r="2" fill="#5ec4c4"/>
<circle cx="575.4" cy="350.2" r="2" fill="#f39a45"/>
<circle cx="575.4" cy="373" r="2" fill="#5ec4c4"/>
<circle cx="609.8" cy="350.2" r="2" fill="#f39a45"/>
<circle cx="609.8" cy="373" r="2" fill="#5ec4c4"/>
<circle cx="555.5" cy="428" r="4.5" fill="#f39a45" opacity="0.9"/>
<text x="564.5" y="430.3" font-size="6.6" fill="#7a7a7a" textLength="23" lengthAdjust="spacingAndGlyphs">Training</text>
<circle cx="595.7" cy="428" r="4.5" fill="#5ec4c4" opacity="0.9"/>
<text x="604.4" y="430.3" font-size="6.6" fill="#7a7a7a" textLength="29.4" lengthAdjust="spacingAndGlyphs">Validation</text>
</svg>
</body></html>
